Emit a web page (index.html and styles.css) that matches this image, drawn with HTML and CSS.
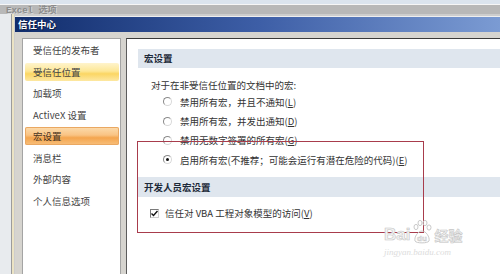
FILE: index.html
```html
<!DOCTYPE html>
<html lang="zh-CN">
<head>
    <meta charset="UTF-8">
    <meta name="viewport" content="width=device-width, initial-scale=1.0">
    <title>信任中心</title>
    <link rel="stylesheet" href="styles.css">
</head>
<body>
    <div class="top-strip"></div>
    <div class="back-window">
        <div class="back-title">Excel 选项</div>
        <div class="back-body">
            <div class="dialog">
                <div class="dialog-title">信任中心</div>
                <div class="dialog-main">
                    <ul class="side">
                        <li>受信任的发布者</li>
                        <li class="hover">受信任位置</li>
                        <li>加载项</li>
                        <li>ActiveX 设置</li>
                        <li class="active">宏设置</li>
                        <li>消息栏</li>
                        <li>外部内容</li>
                        <li>个人信息选项</li>
                    </ul>

                    <div class="content">
                        <div class="section-head">宏设置</div>
                        <p class="intro">对于在非受信任位置的文档中的宏:</p>
                        <ul class="options">
                            <li><span class="radio"></span>禁用所有宏，并且不通知(<u>L</u>)</li>
                            <li><span class="radio"></span>禁用所有宏，并发出通知(<u>D</u>)</li>
                            <li><span class="radio"></span>禁用无数字签署的所有宏(<u>G</u>)</li>
                            <li><span class="radio checked"></span>启用所有宏(不推荐；可能会运行有潜在危险的代码)(<u>E</u>)</li>
                        </ul>

                        <div class="section-head dev">开发人员宏设置</div>
                        <div class="check-row">
                            <span class="checkbox">
                                <svg width="7" height="7" viewBox="0 0 7 7"><path d="M0.5 3.5 L2.5 5.5 L6.5 1" fill="none" stroke="#111" stroke-width="1.4"/></svg>
                            </span>
                            信任对 VBA 工程对象模型的访问(<u>V</u>)
                        </div>

                        <!-- red annotation box -->
                        <div class="mark"></div>
                    </div>
                </div>
            </div>
        </div>
    </div>

    <div class="watermark">
        <div class="wm-logo">
            <span class="wm-bai">Bai</span>
            <svg class="wm-paw" width="20" height="24" viewBox="0 0 20 24">
                <g fill="none" stroke="#c9c9c9" stroke-width="1">
                    <ellipse cx="4" cy="7" rx="2" ry="2.6"/>
                    <ellipse cx="8" cy="3" rx="2" ry="2.6"/>
                    <ellipse cx="13" cy="3" rx="2" ry="2.6"/>
                    <ellipse cx="17" cy="7.5" rx="2" ry="2.6"/>
                    <path d="M10 11 C6 11 2 17 3 21 C4 23.5 16 23.5 17 21 C18 17 14 11 10 11 Z"/>
                </g>
                <text x="10" y="21" text-anchor="middle" font-family="Liberation Sans, sans-serif" font-size="8" font-weight="bold" fill="#f2f2f2" stroke="#c9c9c9" stroke-width="0.5">du</text>
            </svg>
            <span class="wm-jy">经验</span>
        </div>
        <div class="wm-url">jingyan.baidu.com</div>
    </div>
</body>
</html>
```

FILE: styles.css
```css
* {
    box-sizing: border-box;
}
body {
    margin: 0;
    width: 500px;
    height: 274px;
    overflow: hidden;
    position: relative;
    background-color: #dbe4ee;
    font-family: "Noto Sans CJK SC", sans-serif;
    font-size: 9.5px;
    color: #333;
}
.top-strip {
    height: 5px;
    background-color: #dbe4ee;
    border-bottom: 1px solid #f6f6f6;
}
.back-title {
    height: 9px;
    line-height: 13px;
    padding-left: 6px;
    background-color: #b8b8b8;
    color: #8c8c8c;
    font-family: "Liberation Mono", "Noto Sans CJK SC", monospace;
    font-size: 9px;
    font-weight: bold;
    text-shadow: 1px 1px 0 #dadada;
    white-space: nowrap;
}
.back-body {
    height: 260px;
    padding: 2px 0 0 15px;
    background: linear-gradient(to right, #e8ebee 0 11px, #9c9c9c 11px 12px, #ebe3c4 12px 14px, #cdcdcd 14px 15px);
}
.dialog {
    height: 100%;
    background-color: #d6d4cf;
    border-top: 1px solid #eeeeee;
}
.dialog-title {
    height: 15px;
    line-height: 15px;
    padding-left: 3px;
    background: linear-gradient(to right, #112d6c, #3d5ea6 50%, #7b9bd3);
    color: #fff;
    font-weight: bold;
    text-shadow: 1px 1px 0 #0a1a40;
}
.dialog-main {
    display: flex;
    height: calc(100% - 15px);
    padding: 6px 0 0 7px;
}
.side {
    width: 99px;
    margin: 0;
    padding: 2px 0 0 0;
    list-style: none;
    display: flex;
    flex-direction: column;
    gap: 3.5px;
    background-color: #fff;
    border: 1px solid #a4a4a4;
    border-bottom: none;
}
.side li {
    height: 18px;
    line-height: 18px;
    margin: 0 1px 0 2px;
    padding-left: 8px;
    color: #444;
    border-radius: 2px;
    white-space: nowrap;
}
.side li.hover {
    background: linear-gradient(#fff4cc, #fde797 45%, #fbd663 60%, #fde8a2);
}
.side li.active {
    background: linear-gradient(#fcdcae, #f9c383 45%, #f4a54e 60%, #f8c07c);
    box-shadow: inset 0 0 0 1px #eaa862;
    color: #4a3422;
}
.content {
    flex: 1;
    position: relative;
    margin-left: 5px;
    background-color: #fff;
    border-top: 1px solid #3a3a3a;
    border-left: 1px solid #5c5c5c;
}
.section-head {
    height: 19px;
    line-height: 19px;
    margin: 10px 0 0 11px;
    padding-left: 6px;
    background-color: #dfe6ee;
    font-weight: bold;
    color: #1d2a3a;
}
.section-head.dev {
    height: 20px;
    line-height: 20px;
    margin-top: 7.5px;
}
.intro {
    margin: 10px 0 0 24px;
    line-height: 14px;
    white-space: nowrap;
}
.options {
    margin: 0;
    padding: 0 0 0 36px;
    list-style: none;
}
.options li {
    height: 19.4px;
    display: flex;
    align-items: center;
    white-space: nowrap;
}
.radio {
    width: 9px;
    height: 9px;
    margin-right: 8px;
    border-radius: 50%;
    border: 1px solid;
    border-color: #8a8a8a #d8d8d8 #d8d8d8 #8a8a8a;
    background-color: #fff;
    position: relative;
    flex-shrink: 0;
}
.radio.checked::after {
    content: "";
    position: absolute;
    left: 2px;
    top: 2px;
    width: 3px;
    height: 3px;
    border-radius: 50%;
    background-color: #111;
}
.check-row {
    height: 16px;
    margin: 8px 0 0 23px;
    display: flex;
    align-items: center;
    white-space: nowrap;
}
.checkbox {
    width: 9px;
    height: 9px;
    margin-right: 6px;
    display: flex;
    align-items: center;
    justify-content: center;
    border: 1px solid;
    border-color: #7a7a7a #cfcfcf #cfcfcf #7a7a7a;
    background-color: #fff;
}
u {
    text-decoration-thickness: 1px;
    text-underline-offset: 1px;
}
.mark {
    position: absolute;
    left: 10px;
    top: 102px;
    width: 287px;
    height: 92px;
    border: 1.5px solid #a83c4c;
}
.watermark {
    position: absolute;
    left: 384px;
    top: 220px;
    color: #f3f3f3;
}
.wm-logo {
    display: flex;
    align-items: flex-end;
    gap: 2px;
}
.wm-bai {
    font-family: "Liberation Sans", sans-serif;
    font-size: 17px;
    font-weight: bold;
    line-height: 18px;
    -webkit-text-stroke: 0.6px #c6c6c6;
}
.wm-jy {
    font-size: 14px;
    font-weight: bold;
    line-height: 18px;
    -webkit-text-stroke: 0.6px #c6c6c6;
}
.wm-url {
    margin-top: 3px;
    font-family: "Liberation Serif", serif;
    font-size: 9px;
    font-style: italic;
    color: #dcdcdc;
}
```
